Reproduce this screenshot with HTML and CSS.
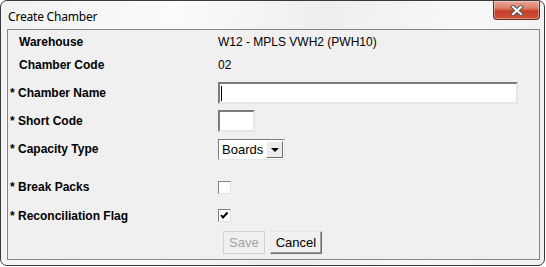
FILE: index.html
```html
<!DOCTYPE html>
<html lang="en">
<head>
  <meta charset="UTF-8">
  <title>Create Chamber</title>
  <link rel="stylesheet" href="styles.css">
</head>
<body>
  <div class="window">
    <div class="titlebar">
      <span class="title">Create Chamber</span>
      <div class="close-btn">
        <svg width="14" height="11" viewBox="0 0 14 11">
          <path d="M3 2 L11 9 M11 2 L3 9" stroke="#555" stroke-width="4" stroke-linecap="square"/>
          <path d="M3 2 L11 9 M11 2 L3 9" stroke="#fff" stroke-width="2" stroke-linecap="square"/>
        </svg>
      </div>
    </div>
    <div class="panel">
      <div class="form-grid">
        <div class="label plain">Warehouse</div>
        <div class="value">W12 - MPLS VWH2 (PWH10)</div>

        <div class="label plain">Chamber Code</div>
        <div class="value">02</div>

        <div class="label">* Chamber Name</div>
        <div class="value">
          <div class="field field-wide"><span class="caret"></span></div>
        </div>

        <div class="label">* Short Code</div>
        <div class="value">
          <div class="field field-short"></div>
        </div>

        <div class="label">* Capacity Type</div>
        <div class="value">
          <div class="select">
            <span class="select-text">Boards</span>
            <span class="select-arrow"></span>
          </div>
        </div>

        <div class="label">* Break Packs</div>
        <div class="value">
          <div class="checkbox"></div>
        </div>

        <div class="label">* Reconciliation Flag</div>
        <div class="value">
          <div class="checkbox">
            <svg width="9" height="9" viewBox="0 0 9 9">
              <path d="M1 4 L3 6.5 L7.5 1.5" stroke="#000" stroke-width="2" fill="none"/>
            </svg>
          </div>
        </div>
      </div>
      <div class="actions">
        <button class="btn" disabled>Save</button>
        <button class="btn">Cancel</button>
      </div>
    </div>
  </div>
</body>
</html>
```

FILE: styles.css
```css
html, body {
  margin: 0;
  padding: 0;
  background: #fff;
  font-family: 'Liberation Sans', Arial, sans-serif;
  color: #000;
}
.window {
  box-sizing: border-box;
  width: 545px;
  height: 266px;
  border: 1px solid #3a3a3a;
  border-radius: 7px;
  padding: 0 4px 5px 6px;
  background: linear-gradient(100deg, #f2f2f2 0%, #fbfbfb 30%, #eeeeee 55%, #f8f8f8 80%, #f0f0f0 100%);
  display: flex;
  flex-direction: column;
}
.titlebar {
  height: 28px;
  display: flex;
  justify-content: space-between;
  align-items: flex-start;
}
.title {
  font-family: 'Segoe UI', 'Noto Sans', sans-serif;
  font-size: 12px;
  letter-spacing: -0.2px;
  padding: 7px 0 0 1px;
  color: #000;
}
.close-btn {
  box-sizing: border-box;
  width: 47px;
  height: 19px;
  border: 1px solid #6a2c22;
  border-top: none;
  border-radius: 0 0 4px 4px;
  background: linear-gradient(#e8a898 0%, #dc8068 40%, #c63f27 55%, #cd5339 100%);
  box-shadow: inset 0 0 0 1px rgba(255,255,255,0.35);
  display: flex;
  align-items: center;
  justify-content: center;
}
.panel {
  flex: 1;
  border: 1px solid #858585;
  background: #f0f0f0;
  display: flex;
  flex-direction: column;
}
.form-grid {
  display: grid;
  grid-template-columns: 210px 1fr;
  grid-template-rows: 23px 24px 32px 24px 32px 44px 13px;
  font-size: 12px;
}
.label {
  font-weight: bold;
  padding-left: 2px;
  display: flex;
  align-items: center;
  white-space: nowrap;
}
.label.plain {
  padding-left: 11px;
}
.value {
  display: flex;
  align-items: center;
}
.field {
  box-sizing: border-box;
  height: 22px;
  background: #fff;
  border: 2px solid;
  border-color: #7b7b7b #e6e6e6 #e6e6e6 #7b7b7b;
  display: flex;
  align-items: center;
}
.field-wide {
  width: 300px;
}
.field-short {
  width: 37px;
}
.caret {
  width: 1px;
  height: 15px;
  margin-left: 1px;
  background: #000;
}
.select {
  box-sizing: border-box;
  width: 67px;
  height: 21px;
  background: #fff;
  border: 1px solid;
  border-color: #7b7b7b #e6e6e6 #e6e6e6 #7b7b7b;
  display: flex;
  align-items: center;
  justify-content: space-between;
  padding-right: 1px;
}
.select-text {
  font-size: 13px;
  padding-left: 3px;
}
.select-arrow {
  box-sizing: border-box;
  width: 17px;
  height: 17px;
  background: #ececec;
  border: 1px solid;
  border-color: #fff #6e6e6e #6e6e6e #fff;
  display: flex;
  align-items: center;
  justify-content: center;
}
.select-arrow::after {
  content: "";
  border-left: 4px solid transparent;
  border-right: 4px solid transparent;
  border-top: 4px solid #000;
  margin-top: 1px;
}
.checkbox {
  box-sizing: border-box;
  width: 13px;
  height: 13px;
  background: #fff;
  border: 1px solid;
  border-color: #808080 #e3e3e3 #e3e3e3 #808080;
  display: flex;
  align-items: center;
  justify-content: center;
}
.actions {
  display: flex;
  gap: 5px;
  margin-top: 9px;
  padding-left: 215px;
}
.btn {
  box-sizing: border-box;
  height: 23px;
  padding: 0 5px;
  font-family: 'Liberation Sans', Arial, sans-serif;
  font-size: 13px;
  color: #000;
  background: #f0f0f0;
  border: 1px solid;
  border-color: #e8e8e8 #6e6e6e #6e6e6e #e8e8e8;
  box-shadow: inset -1px -1px 0 #a0a0a0;
}
.btn:disabled {
  color: #a3a3a3;
  border-color: #d2d2d2;
  box-shadow: none;
}
```
